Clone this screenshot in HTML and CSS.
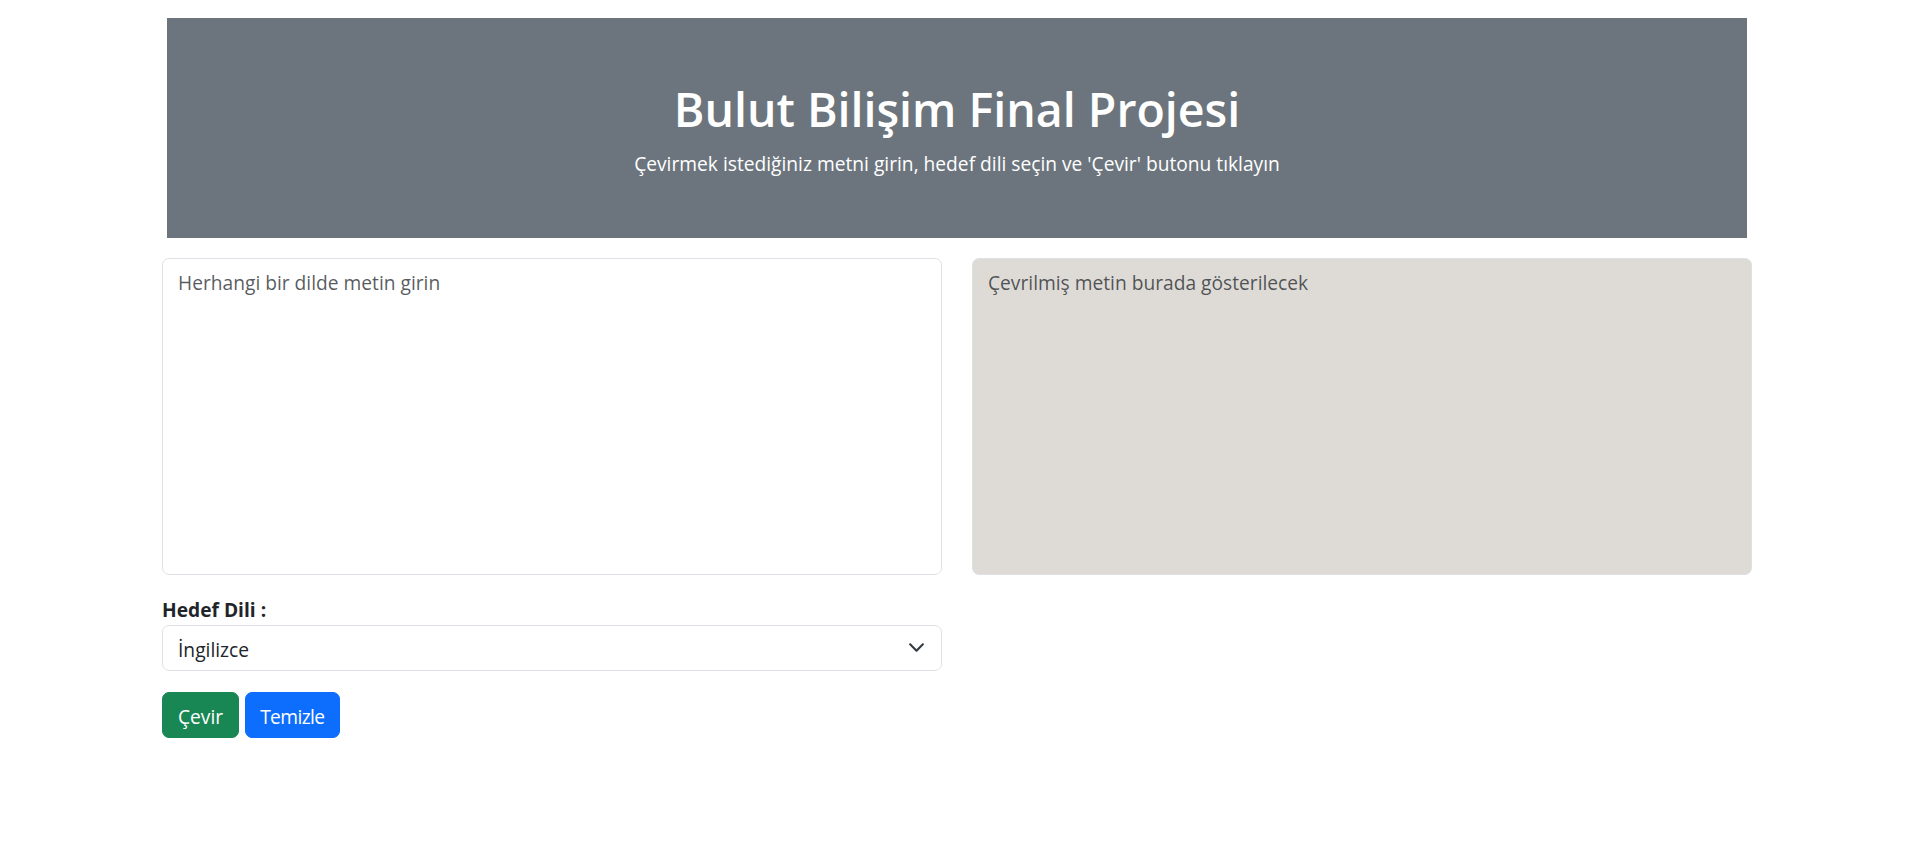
FILE: index.html
```html
<!DOCTYPE html>
<html lang="tr">
<head>
<meta charset="utf-8">
<title>Bulut Bilişim Final Projesi</title>
<link rel="stylesheet" href="styles.css">
</head>
<body>
<div class="page">
  <header class="hero">
    <h1 class="hero-title">Bulut Bilişim Final Projesi</h1>
    <p class="hero-sub">Çevirmek istediğiniz metni girin, hedef dili seçin ve 'Çevir' butonu tıklayın</p>
  </header>
  <div class="panes">
    <textarea class="box" placeholder="Herhangi bir dilde metin girin"></textarea>
    <textarea class="box box-out" placeholder="Çevrilmiş metin burada gösterilecek" readonly></textarea>
  </div>
  <div class="controls">
    <label class="lbl" for="lang">Hedef Dili :</label>
    <div class="select-wrap">
      <select id="lang" class="sel">
        <option>İngilizce</option>
      </select>
      <svg class="chev" viewBox="0 0 16 16" width="17" height="17"><path d="m2 5 6 6 6-6" fill="none" stroke="#343a40" stroke-width="2" stroke-linecap="round" stroke-linejoin="round"/></svg>
    </div>
    <div class="btns">
      <button class="btn btn-green">Çevir</button>
      <button class="btn btn-blue">Temizle</button>
    </div>
  </div>
</div>
</body>
</html>
```
FILE: styles.css
```css
* { box-sizing: border-box; }
html, body { margin: 0; padding: 0; background: #fff; }
body {
  font-family: "Open Sans", "Noto Sans", sans-serif;
  font-size: 19.2px;
  line-height: 1.5;
  color: #212529;
}
.page {
  width: 1590px;
  margin: 0 0 0 162px;
  padding-top: 18px;
}
.hero {
  margin: 0 5px;
  background: #6c757d;
  color: #fff;
  text-align: center;
  padding: 63px 0 0;
  height: 220px;
}
.hero-title {
  margin: 0 0 11px;
  font-size: 46.5px;
  font-weight: 600;
  line-height: 57.6px;
}
.hero-sub {
  margin: 0;
  font-size: 19.2px;
  line-height: 28.8px;
}
.panes {
  display: flex;
  gap: 30px;
  margin-top: 20px;
}
.box {
  display: block;
  width: 780px;
  height: 317px;
  border: 1px solid #dee2e6;
  border-radius: 7px;
  padding: 10px 15px 7px;
  font-family: inherit;
  font-size: 19.2px;
  line-height: 1.5;
  color: #212529;
  background: #fff;
  resize: none;
  outline: none;
}
.box::placeholder { color: rgba(33,37,41,.75); opacity: 1; }
.box-out { background: #dedbd7; }
.controls {
  width: 780px;
  padding-top: 21px;
}
.lbl {
  display: block;
  font-weight: 700;
  line-height: 28.8px;
}
.select-wrap {
  position: relative;
}
.sel {
  display: block;
  width: 100%;
  height: 46px;
  appearance: none;
  -webkit-appearance: none;
  border: 1px solid #dee2e6;
  border-radius: 7px;
  background: #fff;
  padding: 3px 44px 0 15px;
  font-family: inherit;
  font-size: 19.2px;
  color: #212529;
}
.chev {
  position: absolute;
  right: 17px;
  top: 14px;
  pointer-events: none;
}
.btns {
  display: flex;
  gap: 6px;
  margin-top: 21px;
}
.btn {
  height: 46px;
  padding: 3px 15px 0;
  border: 1px solid transparent;
  border-radius: 7px;
  font-family: inherit;
  font-size: 19.2px;
  color: #fff;
  cursor: pointer;
}
.btn-green { background: #198754; border-color: #198754; }
.btn-blue { background: #0d6efd; border-color: #0d6efd; letter-spacing: -0.6px; padding: 3px 14px 0; }
```
